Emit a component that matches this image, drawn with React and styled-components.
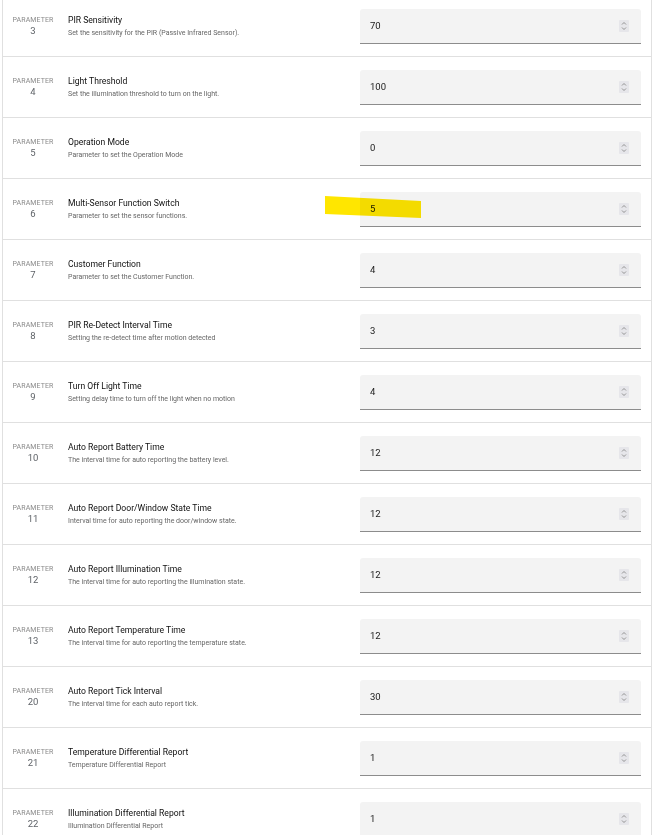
import React from 'react';
import styled, { createGlobalStyle } from 'styled-components';

const GlobalStyle = createGlobalStyle`
  html, body {
    margin: 0;
    padding: 0;
    background: #ffffff;
    font-family: Roboto, "Liberation Sans", Arial, sans-serif;
    overflow: hidden;
  }
`;

const PARAMS = [
  { id: 3, name: 'PIR Sensitivity', desc: 'Set the sensitivity for the PIR (Passive Infrared Sensor).', value: '70' },
  { id: 4, name: 'Light Threshold', desc: 'Set the illumination threshold to turn on the light.', value: '100' },
  { id: 5, name: 'Operation Mode', desc: 'Parameter to set the Operation Mode', value: '0' },
  { id: 6, name: 'Multi-Sensor Function Switch', desc: 'Parameter to set the sensor functions.', value: '5', marked: true },
  { id: 7, name: 'Customer Function', desc: 'Parameter to set the Customer Function.', value: '4' },
  { id: 8, name: 'PIR Re-Detect Interval Time', desc: 'Setting the re-detect time after motion detected', value: '3' },
  { id: 9, name: 'Turn Off Light Time', desc: 'Setting delay time to turn off the light when no motion', value: '4' },
  { id: 10, name: 'Auto Report Battery Time', desc: 'The interval time for auto reporting the battery level.', value: '12' },
  { id: 11, name: 'Auto Report Door/Window State Time', desc: 'Interval time for auto reporting the door/window state.', value: '12' },
  { id: 12, name: 'Auto Report Illumination Time', desc: 'The interval time for auto reporting the illumination state.', value: '12' },
  { id: 13, name: 'Auto Report Temperature Time', desc: 'The interval time for auto reporting the temperature state.', value: '12' },
  { id: 20, name: 'Auto Report Tick Interval', desc: 'The interval time for each auto report tick.', value: '30' },
  { id: 21, name: 'Temperature Differential Report', desc: 'Temperature Differential Report', value: '1' },
  { id: 22, name: 'Illumination Differential Report', desc: 'Illumination Differential Report', value: '1' },
];

const Page = styled.div`
  width: 656px;
  height: 835px;
  overflow: hidden;
`;

const Card = styled.div`
  margin: -4px 0 0 2px;
  width: 648px;
  border-left: 1px solid #e0e0e0;
  border-right: 1px solid #e0e0e0;
`;

const Row = styled.div`
  position: relative;
  display: grid;
  grid-template-columns: 60px 297px 281px;
  align-items: center;
  height: 60px;
  padding: 0 10px 0 0;
  border-bottom: 1px solid #e0e0e0;
`;

const Label = styled.div`
  display: flex;
  flex-direction: column;
  align-items: center;
`;

const Caption = styled.span`
  font-size: 7px;
  line-height: 9px;
  color: #8a8a8a;
  letter-spacing: 0.1px;
`;

const Number = styled.span`
  font-size: 9.5px;
  line-height: 12px;
  color: #5f6368;
`;

const Info = styled.div`
  display: flex;
  flex-direction: column;
  gap: 3px;
  padding-left: 5px;
`;

const Title = styled.span`
  font-size: 8.6px;
  line-height: 11px;
  color: #0f0f0f;
`;

const Desc = styled.span`
  font-size: 7px;
  line-height: 9px;
  color: #666666;
`;

const Field = styled.div`
  display: flex;
  align-items: center;
  justify-content: space-between;
  height: 34px;
  padding: 0 10px 0 10px;
  background: #f3f3f3;
  border-radius: 3px 3px 0 0;
  border-bottom: 1px solid #8c8c8c;
`;

const Value = styled.span`
  font-size: 9.5px;
  color: #1a1a1a;
`;

const Spinner = styled.span`
  display: flex;
  align-items: center;
  justify-content: center;
  width: 10px;
  height: 12px;
  margin-right: 2px;
  background: #e6e6ea;
  border-radius: 1px;
`;

const Marker = styled.svg`
  position: absolute;
  left: 322px;
  top: 17px;
  mix-blend-mode: multiply;
  pointer-events: none;
`;

const SpinIcon = () => (
  <Spinner>
    <svg width="6" height="10" viewBox="0 0 6 10">
      <path d="M1 3.5 L3 1.5 L5 3.5" fill="none" stroke="#888888" strokeWidth="0.9" />
      <path d="M1 6.5 L3 8.5 L5 6.5" fill="none" stroke="#888888" strokeWidth="0.9" />
    </svg>
  </Spinner>
);

const ParamRow = ({ param }) => (
  <Row>
    <Label>
      <Caption>PARAMETER</Caption>
      <Number>{param.id}</Number>
    </Label>
    <Info>
      <Title>{param.name}</Title>
      <Desc>{param.desc}</Desc>
    </Info>
    <Field>
      <Value>{param.value}</Value>
      <SpinIcon />
    </Field>
    {param.marked && (
      <Marker width="97" height="23" viewBox="0 0 97 23">
        <polygon points="0,0 96,5 96,22 0,18" fill="#ffe600" />
      </Marker>
    )}
  </Row>
);

const App = () => (
  <Page>
    <GlobalStyle />
    <Card>
      {PARAMS.map((p) => (
        <ParamRow key={p.id} param={p} />
      ))}
    </Card>
  </Page>
);

export default App;
